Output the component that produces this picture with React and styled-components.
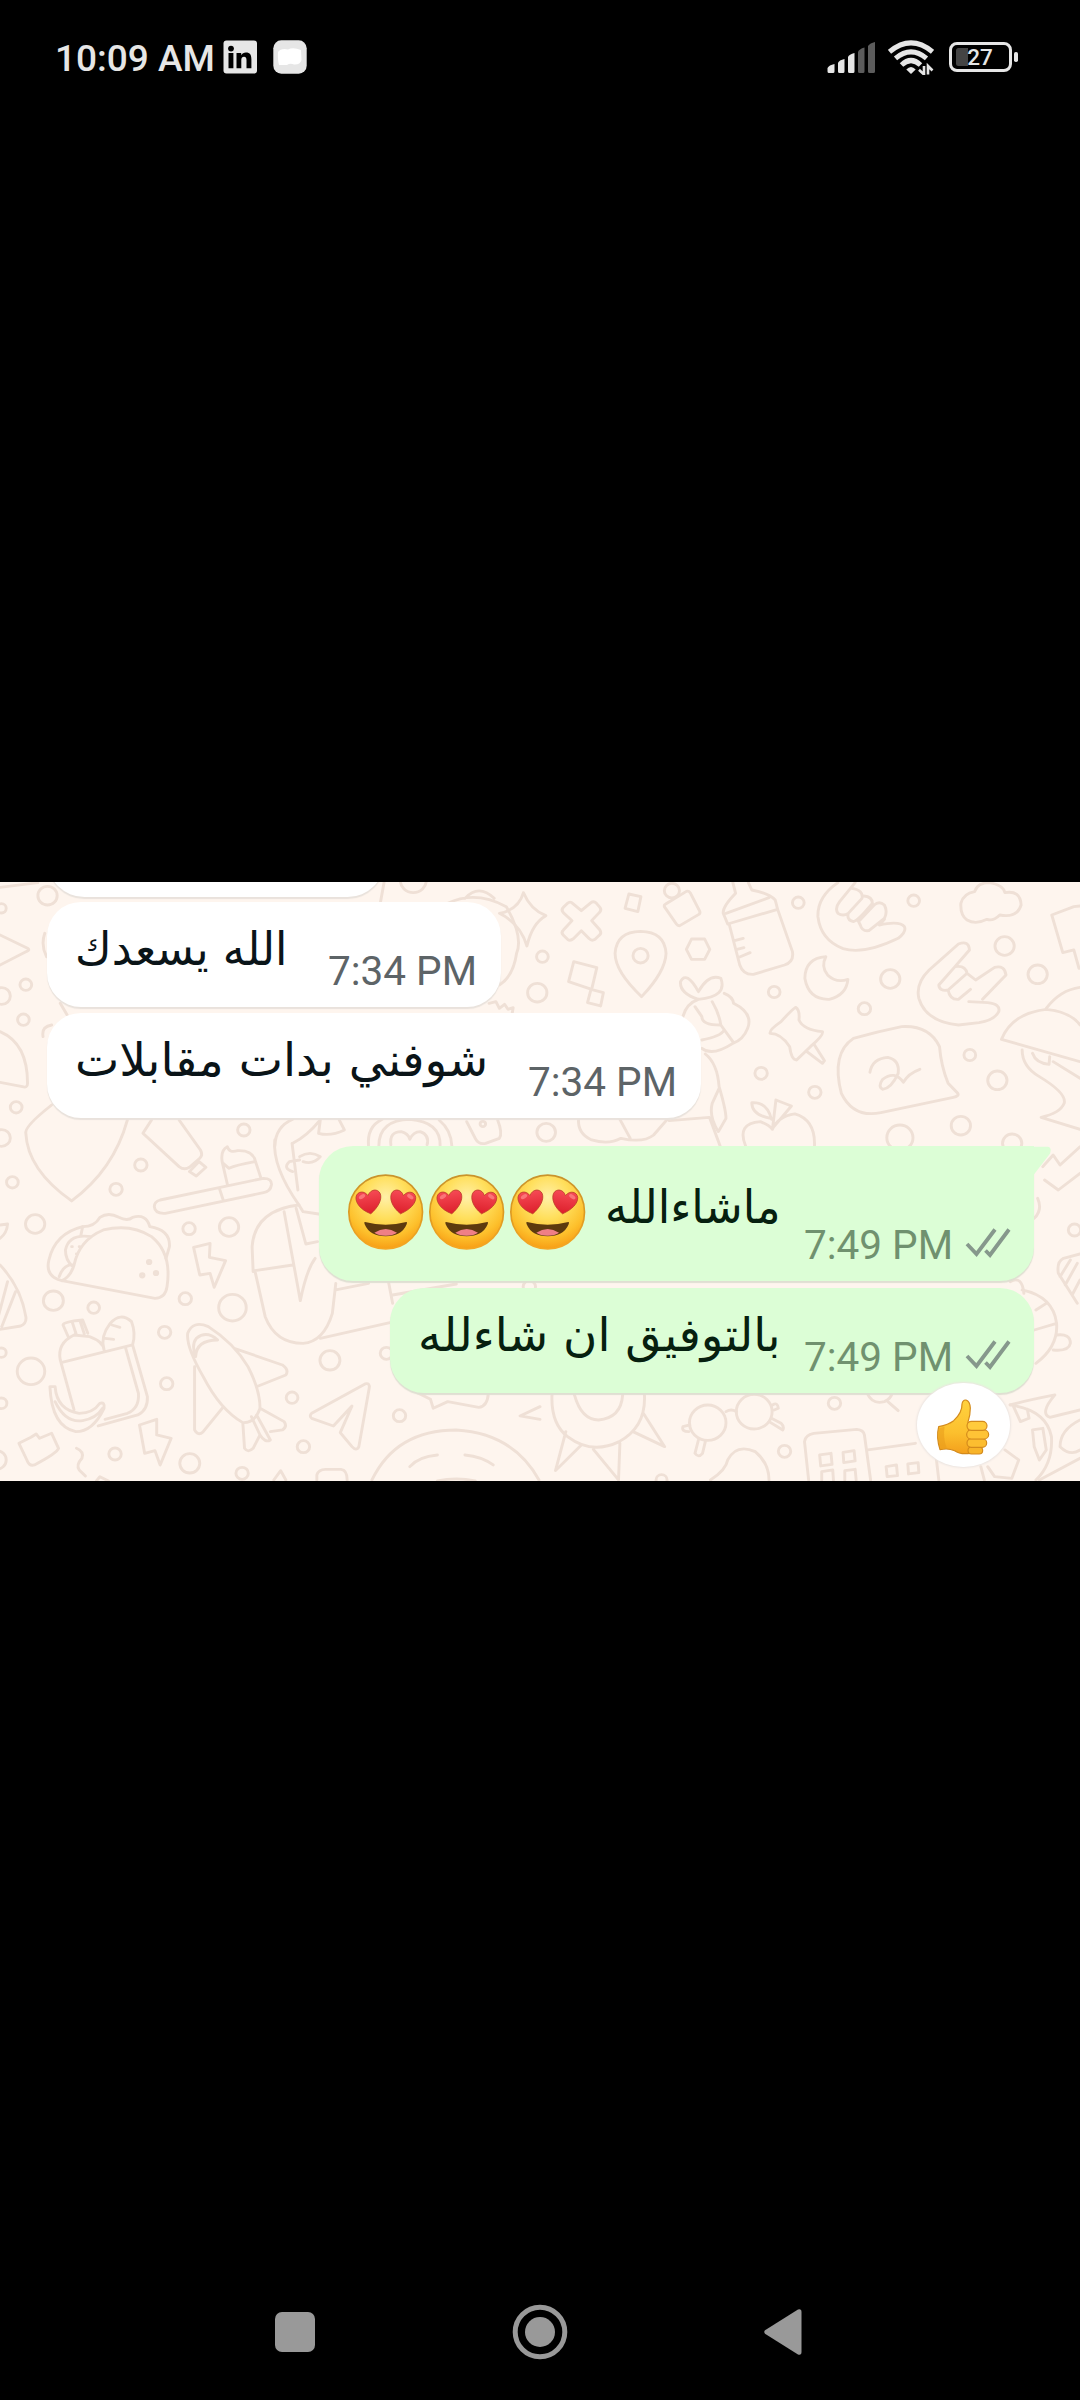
import React, { useLayoutEffect, useRef, useState } from "react";
import styled, { createGlobalStyle } from "styled-components";

const GlobalStyle = createGlobalStyle`
  * { box-sizing: border-box; }
  body { margin: 0; background: #000; }
`;

const Screen = styled.div`
  width: 1080px;
  height: 2400px;
  background: #000;
  display: flex;
  flex-direction: column;
  overflow: hidden;
  font-family: Roboto, "DejaVu Sans", sans-serif;
`;

/* ---------- status bar ---------- */
const StatusBar = styled.header`
  height: 112px;
  padding: 40px 61px 0 55px;
  display: flex;
  justify-content: space-between;
  align-items: flex-start;
`;
const StatusGroup = styled.div`
  display: flex;
  align-items: flex-start;
  height: 36px;
`;
const Clock = styled.span`
  width: 168px;
  color: #e6e6e6;
  font-size: 37px;
  line-height: 38px;
  font-weight: 500;
  white-space: nowrap;
`;
const StatusIcon = styled.svg`
  display: block;
  flex: none;
  margin-left: ${(p) => p.$gap || 0}px;
`;

/* ---------- chat ---------- */
const Viewer = styled.main`
  flex: 1;
  padding-top: 770px;
`;
const ChatPhoto = styled.section`
  position: relative;
  height: 599px;
  overflow: hidden;
  background: #fef5ee;
`;
const Wallpaper = styled.svg`
  position: absolute;
  inset: 0;
  display: block;
`;
const Messages = styled.div`
  position: relative;
  display: flex;
  flex-direction: column;
  padding: 0 46px 0 47px;
`;
const Bubble = styled.article`
  position: relative;
  display: flex;
  justify-content: space-between;
  align-self: ${(p) => (p.$out ? "flex-end" : "flex-start")};
  width: ${(p) => p.$w}px;
  height: ${(p) => p.$h}px;
  margin-top: ${(p) => p.$top}px;
  padding: 0 24px 0 28px;
  border-radius: 34px;
  border-top-right-radius: ${(p) => (p.$tail ? 0 : 34)}px;
  background: ${(p) => (p.$out ? "#dcfed6" : "#ffffff")};
  box-shadow: 0 2px 1px ${(p) => (p.$out ? "#dfdfd2" : "#e9e2dc")};
`;
const CutBubble = styled.div`
  width: 338px;
  height: 75px;
  margin-top: -60px;
  background: #fff;
  border-radius: 38px;
  box-shadow: 0 2px 1px #e9e2dc;
`;
const Tail = styled.svg`
  position: absolute;
  left: 100%;
  top: 0;
  margin-left: -1px;
`;
const Body = styled.div`
  direction: rtl;
  display: flex;
  align-items: flex-start;
  gap: 15px;
  padding-top: ${(p) => p.$pad}px;
`;
const TextBox = styled.div`
  direction: rtl;
  width: ${(p) => p.$w}px;
  height: 60px;
  margin-top: ${(p) => p.$drop || 0}px;
  color: ${(p) => (p.$out ? "#06200f" : "#0a1418")};
`;
const TextRun = styled.span`
  display: inline-block;
  direction: rtl;
  font-family: "DejaVu Sans", sans-serif;
  font-size: 46px;
  line-height: 60px;
  white-space: nowrap;
  transform-origin: 100% 50%;
  font-variant-ligatures: none;
`;
const Meta = styled.div`
  display: flex;
  align-items: flex-start;
  gap: 13px;
  align-self: flex-end;
  height: 58px;
  color: ${(p) => (p.$out ? "#70916f" : "#5d6467")};
  font-size: 40.5px;
  line-height: 44px;
  white-space: nowrap;
`;
const Ticks = styled.svg`
  display: block;
  margin-top: 6px;
  overflow: visible;
`;
const Reaction = styled.div`
  position: absolute;
  right: 24px;
  top: 95px;
  width: 93px;
  height: 84px;
  border-radius: 46px / 42px;
  background: #fff;
  box-shadow: 0 0 2px 1px #ece5e1;
`;

/* ---------- navigation ---------- */
const NavBar = styled.nav`
  height: 136px;
  padding: 0 278px 0 275px;
  display: flex;
  justify-content: space-between;
  align-items: center;
`;
const NavIcon = styled.svg`
  display: block;
  fill: #999;
`;

function ArabicText({ width, out, drop, children }) {
  const ref = useRef(null);
  const [scale, setScale] = useState(1);
  useLayoutEffect(() => {
    setScale(width / ref.current.offsetWidth);
  }, [width]);
  return (
    <TextBox $w={width} $out={out} $drop={drop}>
      <TextRun ref={ref} style={{ transform: `scaleX(${scale})` }}>
        {children}
      </TextRun>
    </TextBox>
  );
}

const DOODLES = [
  {
    x: 0,
    y: -12,
    circles: [[138, 77, 28], [4, 115, 14], [75, 344, 17], [5, 378, 25], [68, 449, 17], [47, 712, 17], [5, 804, 25], [708, 780, 18], [1200, 30, 38], [1560, 368, 28], [1402, 762, 8]],
    paths: [
      "M0 195L80 235Q88 240 78 244L0 285",
      "M0 485Q80 520 80 640Q80 655 65 650L0 637",
      "M150 705Q70 770 75 790Q80 900 208 993Q330 900 370 750",
      "M1520 68Q1505 120 1450 130Q1510 160 1530 228Q1545 160 1585 137Q1540 118 1520 68Z",
      "M1350 85Q1390 40 1435 85M1300 100Q1380 60 1470 110Q1520 200 1500 250Q1490 320 1450 345",
      "M1420 400l20-5 10 20 15-12 10 15 15-5-5 30",
      "M0 52L110 38M1115 38L1105 95M130 190Q118 225 135 260M125 500Q120 470 150 465M175 400l20 35",
      "M440 750L415 790L520 890Q535 902 550 892L580 865Q590 855 582 840L520 750M550 905L578 875L598 892L570 918Z",
      "M1070 828Q1065 770 1110 748M1100 828Q1100 750 1190 748Q1280 755 1278 828M1312 828Q1310 780 1275 750M1135 825Q1130 785 1165 785Q1185 790 1190 808Q1200 785 1220 785Q1248 795 1240 825",
      "M1355 755L1380 805Q1390 825 1410 820L1450 805Q1460 790 1445 750",
      "M798 828Q800 770 850 748M850 820Q890 800 930 750L925 790Q960 800 1000 780L985 750",
    ],
  },
  {
    x: 540,
    y: -12,
    circles: [[292, 257, 22], [383, 62, 22], [750, 98, 17], [1085, 92, 17], [680, 366, 17], [1017, 327, 28], [942, 416, 18], [1349, 228, 28], [1445, 313, 28], [1248, 555, 17], [1328, 631, 28], [642, 610, 18], [798, 667, 18], [1222, 767, 28], [1045, 803, 38], [1371, 820, 28], [18, 787, 27], [7, 260, 17]],
    paths: [
      "M92 98L120 122L148 98Q156 92 164 100L174 112Q180 120 172 128L150 152L174 180Q180 190 172 196L160 208Q150 214 143 206L120 182L97 206Q88 214 80 208L68 196Q60 188 68 180L93 152L68 128Q60 120 68 112L80 100Q86 94 92 98Z",
      "M258 72L293 80L284 125L247 115Z",
      "M365 102L425 64Q432 62 436 68L464 124Q466 130 460 134L406 167Q400 168 396 162L361 110Q360 104 365 102Z",
      "M295 380Q218 305 218 250Q222 185 292 184Q362 185 366 250Q364 305 295 380Z",
      "M440 207L478 207L493 238L478 268L440 268L425 238Z",
      "M98 275L165 293L150 358L83 335ZM148 358L184 368L176 408L138 398Z",
      "M560 38L568 70Q530 110 532 130L545 162L690 118L683 90Q665 70 615 60L605 38M540 130L665 83M550 165L580 285Q590 315 620 313L710 285Q738 275 733 245L690 118M565 212L590 205M572 238L592 233M578 262L610 248",
      "M865 38Q805 80 807 140Q815 210 880 236Q940 255 1040 205Q1065 185 1058 170Q1045 152 985 165L1000 148M915 38L870 95Q855 115 865 130Q880 140 895 130L935 85Q940 60 905 55M895 130Q890 150 910 155Q925 150 965 100Q965 80 940 78M930 165Q935 185 955 182L1000 145Q1010 125 1000 105Q985 92 970 105L925 155L930 165",
      "M1215 465Q1120 455 1100 385Q1090 340 1130 300L1215 222Q1245 210 1247 240L1205 290Q1235 285 1240 310L1185 360Q1160 365 1158 345L1205 290M1185 360Q1190 390 1215 388L1250 358M1240 310L1265 330L1320 292Q1350 285 1353 315L1285 388M1245 395L1300 398Q1338 402 1332 425Q1320 450 1275 458L1215 465",
      "M830 260Q770 265 769 325Q780 390 840 388Q890 375 894 328Q860 340 835 315Q815 290 830 260Z",
      "M1262 65Q1270 38 1305 38Q1345 45 1350 68Q1395 60 1397 105Q1385 145 1335 135Q1315 155 1298 148Q1265 165 1240 150Q1220 135 1222 100Q1230 70 1262 65Z",
      "M1568 108L1550 110L1486 135L1518 248L1550 240L1565 295",
      "M1340 508Q1370 430 1470 418Q1540 425 1568 465M1340 508L1568 575M1470 415Q1510 360 1568 352M1400 540Q1400 590 1450 620Q1530 670 1522 700Q1510 730 1455 742L1568 778M1430 550Q1440 580 1478 583L1480 560M1490 575L1568 625",
      "M910 505Q980 485 1050 470Q1130 465 1160 530Q1165 590 1185 640L1213 670Q1218 678 1200 682L990 728Q910 745 875 670Q845 550 910 505Z",
      "M958 607Q965 565 1010 562Q1045 570 1040 610Q1020 655 995 658Q980 650 995 628Q1030 600 1055 637Q1070 610 1103 598",
      "M742 412Q755 420 752 450Q765 480 820 485Q825 495 785 530L745 570Q730 570 725 530Q700 490 668 490Q665 480 700 455Q730 420 742 412ZM775 545L820 580L826 572L797 525",
      "M460 388Q405 370 408 335Q425 300 460 365Q490 310 525 325Q545 380 460 388M460 388Q425 400 415 440M535 370Q560 380 562 400Q620 430 603 475Q590 510 560 520Q500 560 470 535M500 395Q520 430 525 465L560 515M450 410L470 440Q470 465 525 465M470 510Q525 500 535 480M480 552Q515 580 520 650Q540 720 540 745L518 785Q490 740 500 700L520 655",
      "M597 828Q570 760 640 755Q665 765 675 778Q690 740 740 732Q800 750 797 828M675 778L685 690L730 708L675 775M670 745Q615 735 615 698Q660 695 672 748",
      "M112 745Q108 790 150 810Q200 825 235 805Q300 820 330 795L372 745M375 752L492 742L523 828M232 748L262 805",
    ],
  },
  {
    x: 0,
    y: 248,
    circles: [[409, 105, 18], [36, 157, 17], [337, 178, 18], [102, 282, 28], [549, 296, 18], [665, 291, 28], [538, 506, 18], [675, 533, 40], [155, 512, 29], [272, 533, 17], [478, 607, 18], [90, 724, 40], [484, 761, 18], [958, 691, 29], [1122, 670, 18], [848, 803, 17], [1160, 857, 18], [881, 950, 18], [551, 1000, 29], [334, 972, 18], [703, 1030, 18], [4, 668, 14], [4, 820, 16], [-10, 990, 28], [1537, 470, 18], [433, 396, 5], [413, 436, 5], [453, 429, 5]],
    paths: [
      "M465 210L765 145Q790 145 788 165Q785 185 765 188L480 250Q450 252 448 230Q448 215 465 210ZM638 178L648 210M660 162L645 95Q640 60 660 50Q665 70 690 62Q735 60 742 95L758 145M648 100L665 115Q685 105 740 95",
      "M180 452Q130 440 142 390Q160 310 240 290Q275 290 290 262Q315 245 345 262Q370 275 385 262Q425 250 435 290Q495 300 492 350L482 385",
      "M180 452L450 505Q480 505 485 470Q500 370 440 320Q380 280 300 300Q230 330 215 405Q205 440 180 452M265 320Q200 310 190 360Q190 390 210 408M240 290L235 315M172 440Q185 400 215 405M208 350h2M222 372h2M230 350h2",
      "M562 352L610 340L608 382L655 392L622 472L610 430L580 435Z",
      "M405 885L455 868L455 915L497 925L465 1005L450 962L420 970Z",
      "M0 405Q60 470 75 560Q78 580 60 588L0 598M22 455L-5 560M45 485L5 590M0 285L22 282Q20 310 0 325",
      "M215 840L175 690Q165 640 215 615L260 620Q300 635 302 660M180 697L385 645L428 800Q430 840 400 855L285 888M365 655L402 790Q405 835 370 850L305 868M200 625L183 585Q185 575 240 570L255 610M210 577L222 615M232 572L245 612M302 660Q290 620 320 580Q350 545 382 575Q395 610 385 645M325 585L348 592M305 625L330 628",
      "M145 770L160 770Q165 840 230 850Q270 850 290 820Q305 815 302 835Q270 905 220 905Q150 890 145 770ZM160 815Q190 880 240 872Q280 865 298 835",
      "M545 610Q560 570 605 590Q680 640 720 710Q755 780 755 835Q740 880 705 878Q640 840 590 740Q540 650 545 610ZM568 680Q570 630 632 630Q600 600 570 625Q555 645 568 680M680 655L820 705Q840 720 830 735L750 768M565 710L565 900Q575 920 590 905L645 835M705 878L710 955Q720 970 735 955L755 915L730 860M755 915Q770 940 785 930L745 855M785 905L820 900Q835 890 825 875L755 835",
      "M905 850L1060 762Q1075 758 1072 775L1042 950Q1035 965 1022 950L988 908L1022 828L968 888L905 865Q897 858 905 850Z",
      "M1080 1050Q1150 900 1325 900Q1490 910 1565 1050M1190 1010Q1215 980 1270 975M1350 975Q1400 980 1432 1005M1270 1053Q1325 1040 1380 1053",
      "M868 225Q740 240 732 350L735 425M740 422L770 560Q800 640 880 640Q940 635 965 550L975 460M740 422L850 405M825 245L872 512Q890 420 915 385M860 235L888 342L922 335M975 480L1070 460M1128 455L1140 520M930 625L1132 578M1140 495L1325 462",
      "M868 225Q790 110 798 30M868 225L880 245L925 252M848 40L865 180M870 80Q900 60 930 80Q910 105 880 95M850 125Q820 115 840 95L870 90",
      "M55 940L90 922L105 912L115 925L150 910L170 955Q165 970 100 1005Q85 1010 78 990ZM222 955Q245 965 238 985Q220 1005 230 1020L248 1038",
      "M920 1050L920 1035Q925 1018 945 1018L990 1018Q1008 1020 1008 1050M795 1050L815 1022L830 1050M280 1053L290 1040L315 1053M1215 790L1250 808L1258 835L1300 815L1390 832Q1415 830 1418 790M1568 830L1510 858L1568 868",
    ],
  },
  {
    x: 540,
    y: 248,
    circles: [[487, 878, 53], [622, 845, 52], [855, 820, 18], [710, 964, 18], [353, 1050, 16], [1552, 300, 18]],
    paths: [
      "M35 790Q30 880 80 920Q150 975 230 935Q310 890 303 790M100 795Q120 870 170 870Q235 865 240 795M75 905L45 1022L120 945M155 958L228 1050L232 940M270 905L362 950L300 850",
      "M540 845Q555 835 570 845M435 885L415 890Q410 905 432 905M460 930L450 970Q460 985 472 970L480 935M665 875L705 900Q710 890 700 880L672 865M675 825Q690 815 692 835L680 840",
      "M495 1050Q540 1020 545 990Q570 940 625 965Q665 1000 665 1050",
      "M780 1050L768 935Q770 915 795 910L920 898Q940 900 942 915L960 1050M952 960L1090 940M1150 980L1158 1050M812 975L845 970L848 1003L815 1008ZM880 967L912 962L915 993L882 998ZM818 1050L818 1025L850 1020L852 1050M885 1050L885 1022L915 1018L918 1050M1005 1010L1035 1005L1038 1037L1008 1040ZM1068 1002L1098 998L1100 1028L1070 1032Z",
      "M950 790Q965 825 1000 815Q1020 805 1022 790M1010 815L1040 842",
      "M1365 825Q1470 840 1485 920Q1490 1000 1440 1050M1375 830L1395 875L1420 865L1415 838M1430 900L1460 895L1470 960L1450 990L1435 950ZM1300 1010L1320 1040L1370 1045L1390 990L1350 960M1280 1010L1290 1050",
      "M1365 825Q1420 810 1495 795Q1450 850 1480 862Q1510 855 1568 840M1568 870Q1510 900 1510 950Q1540 980 1568 960M1568 985L1450 1050",
      "M1568 372L1520 385Q1500 395 1505 430L1560 520M1540 390L1510 440M1560 400L1525 465M1568 450L1545 495",
      "M1400 480Q1490 500 1500 580Q1505 650 1440 700M1500 615Q1540 610 1540 640Q1535 665 1490 660M1470 520L1440 540M1500 580L1435 600M1365 455Q1400 435 1405 490",
      "M1460 110L1490 75L1510 105L1568 50M1465 150L1505 180L1568 130M1445 205Q1460 240 1435 265",
    ],
  },
];

function DoodleWallpaper() {
  return (
    <Wallpaper width="1080" height="599" viewBox="0 0 1080 599" fill="none" stroke="#efe0d6" strokeWidth="8.5" strokeLinecap="round" strokeLinejoin="round">
      {DOODLES.map((d, i) => (
        <g key={i} transform={`translate(${d.x} ${d.y}) scale(0.3444 0.3333)`}>
          {d.circles.map(([cx, cy, r], j) => (
            <circle key={j} cx={cx} cy={cy} r={r} />
          ))}
          {d.paths.map((p, j) => (
            <path key={j} d={p} />
          ))}
        </g>
      ))}
    </Wallpaper>
  );
}

function HeartEyes() {
  const heart = "M0 24C-20 12-27-4-24-15C-20-27-5-26 0-14C7-27 22-26 25-14C27-2 18 12 0 24Z";
  const face = (x, key) => (
    <g key={key} transform={`translate(${x} 117)`}>
      <circle r="110.500" fill="url(#face)" stroke="url(#rim)" strokeWidth="5" />
      <g transform="translate(-50 -29) rotate(-9) scale(1.5 1.45)">
        <path d={heart} fill="url(#heart)" stroke="#b93a28" strokeWidth="1.5" />
        <ellipse cx="-12" cy="-14" rx="7" ry="4" fill="#ff8a8a" opacity=".7" transform="rotate(-25 -12 -14)" />
      </g>
      <g transform="translate(50 -29) rotate(9) scale(1.5 1.45)">
        <path d={heart} fill="url(#heart)" stroke="#b93a28" strokeWidth="1.5" />
        <ellipse cx="14" cy="-14" rx="7" ry="4" fill="#ff8a8a" opacity=".7" transform="rotate(25 14 -14)" />
      </g>
      <path d="M-62 30Q0 46 62 30Q66 30 63 37Q48 73 0 73Q-48 73-63 37Q-66 30-62 30Z" fill="#5d3a0e" />
      <path d="M-34 62Q0 40 34 62Q22 71 0 71Q-22 71-34 62Z" fill="#ef7f86" />
    </g>
  );
  return (
    <svg width="243" height="77" viewBox="0 0 729 231">
      <defs>
        <radialGradient id="face" cx="50%" cy="30%" r="72%">
          <stop offset="0" stopColor="#fff0a8" />
          <stop offset=".4" stopColor="#ffdf5c" />
          <stop offset=".75" stopColor="#fdc02c" />
          <stop offset="1" stopColor="#f79a12" />
        </radialGradient>
        <linearGradient id="rim" x1="0" y1="0" x2="0" y2="1">
          <stop offset="0" stopColor="#c9942c" />
          <stop offset=".5" stopColor="#dc9a22" />
          <stop offset="1" stopColor="#f5a623" />
        </linearGradient>
        <linearGradient id="heart" x1="0" y1="0" x2="0" y2="1">
          <stop offset="0" stopColor="#f64a55" />
          <stop offset="1" stopColor="#dc1f2b" />
        </linearGradient>
      </defs>
      {[116, 359, 602].map(face)}
    </svg>
  );
}

function ThumbsUp() {
  return (
    <svg width="93" height="84" viewBox="111 37 279 252">
      <defs>
        <linearGradient id="hand" x1="0" y1="0" x2="0" y2="1">
          <stop offset="0" stopColor="#ffd23f" />
          <stop offset=".6" stopColor="#fcc02e" />
          <stop offset="1" stopColor="#f3a01c" />
        </linearGradient>
      </defs>
      <g stroke="#d38a1c" strokeWidth="3.5" strokeLinejoin="round">
        <path d="M176 168Q205 162 221 150Q247 126 246 100Q248 87 258 88Q270 92 271 112Q271 134 264 154L270 248Q240 252 224 240Q205 232 180 237Q168 200 176 168Z" fill="url(#hand)" />
        <rect x="264" y="229" width="44" height="21" rx="10.5" fill="#f8b429" />
        <rect x="261" y="204" width="59" height="26" rx="13" fill="#fcbd30" />
        <rect x="260" y="178" width="66" height="27" rx="13.5" fill="#fec336" />
        <rect x="261" y="152" width="60" height="27" rx="13.5" fill="#ffcb3c" />
      </g>
      <path d="M178 172Q172 205 182 234L200 231Q188 200 194 168Z" fill="#e79a1c" opacity=".55" />
    </svg>
  );
}

function DeliveredTicks() {
  return (
    <Ticks width="44" height="28" viewBox="0 0 44 28" fill="none" stroke="#86988c" strokeWidth="3.8">
      <path d="M1 15L10.5 25L29 .5M19.5 21.5L24 26L43 .5" />
    </Ticks>
  );
}

export default function App() {
  return (
    <Screen>
      <GlobalStyle />
      <StatusBar>
        <StatusGroup>
          <Clock>10:09 AM</Clock>
          <StatusIcon width="35" height="34" viewBox="0 0 35 34">
            <rect x=".5" y=".5" width="33.5" height="33" rx="3" fill="#e6e6e6" />
            <circle cx="8" cy="8.6" r="2.9" fill="#000" />
            <path d="M5.500 13h4.900v15.300H5.500zM13.500 13h4.700v2.200c1-1.600 2.600-2.600 4.700-2.600 4.300 0 5.500 2.700 5.500 6.800v8.900h-4.900v-8c0-2.200-.6-3.600-2.500-3.600-2 0-2.700 1.400-2.700 3.600v8h-4.800z" fill="#000" />
          </StatusIcon>
          <StatusIcon $gap={15} width="34" height="34" viewBox="0 0 34 34">
            <rect x=".3" y=".3" width="33.400" height="33.400" rx="8" fill="#e6e6e6" />
            <path d="M5 12Q8 8 15 9.500Q20 7 28 10L28.500 20Q27 25 21 24.500Q17 23 14 25H6Q4.500 20 5 12Z" fill="#fff" />
          </StatusIcon>
        </StatusGroup>
        <StatusGroup>
          <StatusIcon width="48" height="34" viewBox="0 0 48 34">
            <path d="M.5 28Q2 25 7.500 24V31.500Q7.500 33 6 33H2Q.5 33 .5 31.500ZM11 23Q12 20 17.500 19V31.500Q17.500 33 16 33H12.500Q11 33 11 31.500ZM21 17Q22 14.500 27.500 13V31.500Q27.500 33 26 33H22.500Q21 33 21 31.500Z" fill="#e6e6e6" />
            <path d="M31 12Q32 9 37.500 7.500V31.500Q37.500 33 36 33H32.500Q31 33 31 31.500ZM41 6Q43 3 48 2V31.500Q48 33 46.500 33H42.500Q41 33 41 31.500Z" fill="#5c5c5c" />
          </StatusIcon>
          <StatusIcon $gap={13} width="46" height="35" viewBox="0 0 46 35">
            <g fill="none" stroke="#e6e6e6" strokeWidth="5">
              <path d="M1.500 11.800Q23-6 44.500 11.800" />
              <path d="M7.500 18.300Q23 5.300 38.500 18.300" />
              <path d="M13.500 25Q23 16 32.500 25" />
            </g>
            <path d="M18.300 29.500Q23 24.500 27.700 29.500L23 34Z" fill="#e6e6e6" />
            <path d="M36 26V34.500L31 29.800M40 34.500V26L44.500 30.500" fill="none" stroke="#e6e6e6" strokeWidth="2.600" />
          </StatusIcon>
          <StatusIcon $gap={15} width="70" height="34" viewBox="0 0 70 34">
            <rect x="1.500" y="3.500" width="60" height="27" rx="6.500" fill="none" stroke="#e6e6e6" strokeWidth="3" />
            <path d="M9.500 8H19V26H9.500Q7 26 7 23.500V10.500Q7 8 9.500 8Z" fill="#444" />
            <rect x="65" y="12" width="4" height="10" rx="1.800" fill="#e6e6e6" />
            <text x="31" y="25.300" textAnchor="middle" fontFamily="Roboto" fontSize="22.500" fontWeight="500" fill="#e6e6e6">27</text>
          </StatusIcon>
        </StatusGroup>
      </StatusBar>

      <Viewer>
        <ChatPhoto>
          <DoodleWallpaper />
          <Messages>
            <CutBubble />
            <Bubble $w={454} $h={105} $top={5}>
              <Body $pad={17}>
                <ArabicText width={212}>الله يسعدك</ArabicText>
              </Body>
              <Meta>7:34 PM</Meta>
            </Bubble>
            <Bubble $w={654} $h={105} $top={6}>
              <Body $pad={17}>
                <ArabicText width={413}>شوفني بدات مقابلات</ArabicText>
              </Body>
              <Meta>7:34 PM</Meta>
            </Bubble>
            <Bubble $out $tail $w={715} $h={135} $top={28}>
              <Tail width="19" height="34" viewBox="0 0 20 34">
                <path d="M0 0H16Q20 1 18 7L1 29V34H0Z" fill="#dcfed6" />
              </Tail>
              <Body $pad={27}>
                <ArabicText out width={176} drop={4}>ماشاءالله</ArabicText>
                <HeartEyes />
              </Body>
              <Meta $out>
                7:49 PM
                <DeliveredTicks />
              </Meta>
            </Bubble>
            <Bubble $out $w={644} $h={105} $top={7}>
              <Body $pad={17}>
                <ArabicText out width={363}>بالتوفيق ان شاءلله</ArabicText>
              </Body>
              <Meta $out>
                7:49 PM
                <DeliveredTicks />
              </Meta>
              <Reaction>
                <ThumbsUp />
              </Reaction>
            </Bubble>
          </Messages>
        </ChatPhoto>
      </Viewer>

      <NavBar>
        <NavIcon width="40" height="40" viewBox="0 0 40 40">
          <rect width="40" height="40" rx="7" />
        </NavIcon>
        <NavIcon width="56" height="56" viewBox="0 0 56 56">
          <circle cx="28" cy="28" r="24.800" fill="none" stroke="#999" strokeWidth="5" />
          <circle cx="28" cy="28" r="15" />
        </NavIcon>
        <NavIcon width="38" height="46" viewBox="0 0 38 46">
          <path d="M1 21.300Q-.5 23 1 24.700L34 45.500Q37.500 46.500 37.500 43V3Q37.500-.5 34 .5Z" />
        </NavIcon>
      </NavBar>
    </Screen>
  );
}
